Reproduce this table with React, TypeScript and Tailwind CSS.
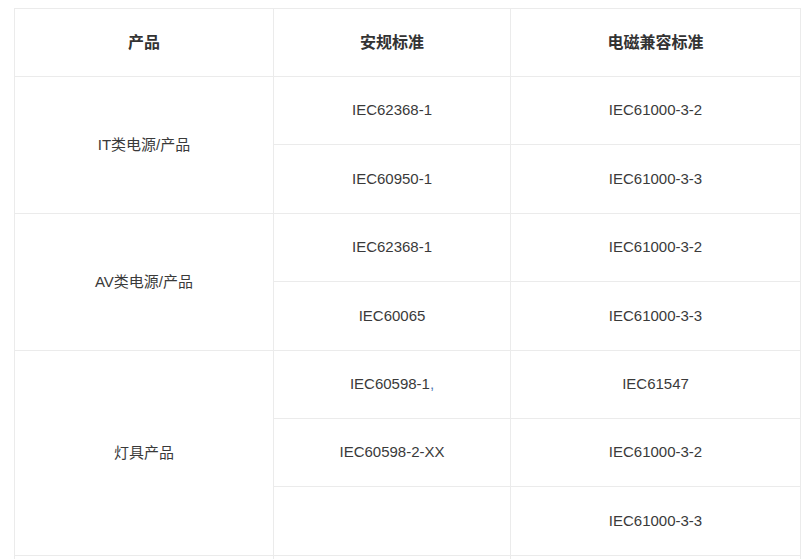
import React from "react";

const font = { fontFamily: '"Liberation Sans", Arial, "Noto Sans CJK SC", sans-serif' };

export default function App() {
  const td = "border border-[#ebebeb] text-center align-middle text-[15px] text-[#3a3a3a] p-0";
  const th = "border border-[#ebebeb] text-center align-middle text-[16px] font-bold text-[#333333]";
  return (
    <div className="w-[806px] h-[559px] bg-white overflow-hidden pt-[8px] pl-[14px]" style={font}>
      <table className="border-collapse w-[786px] table-fixed">
        <colgroup>
          <col className="w-[259px]" />
          <col className="w-[237px]" />
          <col className="w-[290px]" />
        </colgroup>
        <thead>
          <tr className="h-[68px]">
            <th className={th}>产品</th>
            <th className={th}>安规标准</th>
            <th className={th}>电磁兼容标准</th>
          </tr>
        </thead>
        <tbody>
          <tr className="h-[68px]">
            <td rowSpan={2} className={td}>IT类电源/产品</td>
            <td className={td}>IEC62368-1</td>
            <td className={td}>IEC61000-3-2</td>
          </tr>
          <tr className="h-[69px]">
            <td className={td}>IEC60950-1</td>
            <td className={td}>IEC61000-3-3</td>
          </tr>
          <tr className="h-[68px]">
            <td rowSpan={2} className={td}>AV类电源/产品</td>
            <td className={td}>IEC62368-1</td>
            <td className={td}>IEC61000-3-2</td>
          </tr>
          <tr className="h-[69px]">
            <td className={td}>IEC60065</td>
            <td className={td}>IEC61000-3-3</td>
          </tr>
          <tr className="h-[68px]">
            <td rowSpan={3} className={td}>灯具产品</td>
            <td className={td}>
              IEC60598-1<span className="text-[#4a78b5]">,</span>
            </td>
            <td className={td}>IEC61547</td>
          </tr>
          <tr className="h-[68px]">
            <td className={td}>IEC60598-2-XX</td>
            <td className={td}>IEC61000-3-2</td>
          </tr>
          <tr className="h-[69px]">
            <td className={td}></td>
            <td className={td}>IEC61000-3-3</td>
          </tr>
          <tr className="h-[68px]">
            <td className={td}></td>
            <td className={td}></td>
            <td className={td}></td>
          </tr>
        </tbody>
      </table>
    </div>
  );
}
